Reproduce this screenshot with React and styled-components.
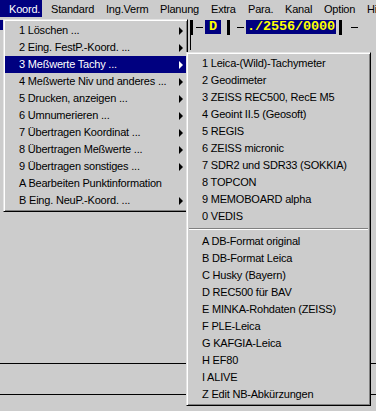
import React from 'react'
import styled, { createGlobalStyle } from 'styled-components'

const GlobalStyle = createGlobalStyle`
  html, body {
    margin: 0;
    padding: 0;
    background: #cccccc;
  }
`

const menuTitles = [
  { label: 'Koord.', w: 42, active: true },
  { label: 'Standard', w: 55 },
  { label: 'Ing.Verm', w: 54 },
  { label: 'Planung', w: 51 },
  { label: 'Extra', w: 37 },
  { label: 'Para.', w: 37 },
  { label: 'Kanal', w: 39 },
  { label: 'Option', w: 43 },
  { label: 'Hilfe', w: 40 },
]

const koordItems = [
  { label: '1 Löschen ...', sub: true },
  { label: '2 Eing. FestP.-Koord. ...', sub: true },
  { label: '3 Meßwerte Tachy ...', sub: true, active: true },
  { label: '4 Meßwerte Niv und anderes ...', sub: true },
  { label: '5 Drucken, anzeigen ...', sub: true },
  { label: '6 Umnumerieren ...', sub: true },
  { label: '7 Übertragen Koordinat ...', sub: true },
  { label: '8 Übertragen Meßwerte  ...', sub: true },
  { label: '9 Übertragen sonstiges ...', sub: true },
  { label: 'A Bearbeiten Punktinformation' },
  { label: 'B Eing. NeuP.-Koord. ...', sub: true },
]

const tachyGroups = [
  [
    '1 Leica-(Wild)-Tachymeter',
    '2 Geodimeter',
    '3 ZEISS REC500, RecE M5',
    '4 Geoint II.5 (Geosoft)',
    '5 REGIS',
    '6 ZEISS micronic',
    '7 SDR2 und SDR33 (SOKKIA)',
    '8 TOPCON',
    '9 MEMOBOARD alpha',
    '0 VEDIS',
  ],
  [
    'A DB-Format original',
    'B DB-Format Leica',
    'C Husky (Bayern)',
    'D REC500 für BAV',
    'E MINKA-Rohdaten (ZEISS)',
    'F PLE-Leica',
    'G KAFGIA-Leica',
    'H EF80',
    'I ALIVE',
    'Z Edit NB-Abkürzungen',
  ],
]

const Screen = styled.div`
  position: relative;
  width: 376px;
  height: 411px;
  overflow: hidden;
  display: flex;
  flex-direction: column;
  background: #cccccc;
  color: #000;
  font-family: 'Liberation Sans', Arial, sans-serif;
  font-size: 11px;
  letter-spacing: -0.2px;
`

const MenuBar = styled.div`
  display: flex;
  height: 17px;
  flex-shrink: 0;
  white-space: nowrap;
`

const MenuTitle = styled.div`
  flex: 0 0 ${(p) => p.$w}px;
  box-sizing: border-box;
  display: flex;
  align-items: center;
  padding-left: 9px;
  background: ${(p) => (p.$active ? '#000080' : 'transparent')};
  color: ${(p) => (p.$active ? '#ffffff' : '#000000')};
`

const Workspace = styled.div`
  flex: 1;
  display: flex;
  flex-direction: column;
`

const FieldRow = styled.div`
  display: flex;
  align-items: flex-start;
  height: 15px;
  margin-top: 3px;
`

const Stub = styled.div`
  width: 3px;
  height: 10px;
  background: #000080;
  margin-right: 187px;
`

const Bar = styled.div`
  position: relative;
  width: 3px;
  height: 15px;
  background: #000;
  margin-right: ${(p) => p.$gap || 4}px;

  &::after {
    content: '';
    display: ${(p) => (p.$tail ? 'block' : 'none')};
    position: absolute;
    left: 0;
    top: 15px;
    width: 1px;
    height: 15px;
    background: #000;
  }
`

const Dash = styled.div`
  width: 7px;
  height: 1px;
  background: #000;
  margin-top: 7px;
  margin-right: ${(p) => p.$gap || 2}px;
`

const Field = styled.div`
  height: 14px;
  line-height: 14px;
  padding: 0 ${(p) => p.$pad}px;
  background: #000080;
  color: #ffff00;
  font-family: 'Liberation Mono', 'DejaVu Sans Mono', monospace;
  font-weight: bold;
  font-size: 13.5px;
  letter-spacing: -0.1px;
  margin-right: ${(p) => p.$gap}px;
`

const Rules = styled.div`
  margin-top: auto;
  margin-bottom: 16px;
  height: 30px;
  border-top: 1px solid #000;
  border-bottom: 1px solid #000;
`

const Menu = styled.div`
  position: absolute;
  left: ${(p) => p.$left}px;
  top: ${(p) => p.$top}px;
  width: 185px;
  box-sizing: border-box;
  padding: 2px 1px;
  background: #cccccc;
  border: 1px solid;
  border-color: #e4e4e4 #000 #000 #e4e4e4;
  box-shadow: inset 1px 1px #ffffff, inset -1px -1px #808080;
  white-space: nowrap;
`

const Item = styled.div`
  position: relative;
  height: 17px;
  line-height: 17px;
  padding-left: 14px;
  background: ${(p) => (p.$active ? '#000080' : 'transparent')};
  color: ${(p) => (p.$active ? '#ffffff' : '#000000')};
`

const Arrow = styled.span`
  position: absolute;
  right: 3px;
  top: 5px;
  width: 0;
  height: 0;
  border-top: 4px solid transparent;
  border-bottom: 4px solid transparent;
  border-left: 4px solid currentColor;
`

const Separator = styled.div`
  height: 0;
  margin: 3px 1px;
  border-top: 1px solid #808080;
  border-bottom: 1px solid #ffffff;
`

const App = () => (
  <Screen>
    <GlobalStyle />
    <MenuBar>
      {menuTitles.map((t) => (
        <MenuTitle key={t.label} $w={t.w} $active={t.active}>
          {t.label}
        </MenuTitle>
      ))}
    </MenuBar>

    <Workspace>
      <FieldRow>
        <Stub />
        <Bar $tail $gap={3} />
        <Dash />
        <Field $pad={4} $gap={6}>D</Field>
        <Bar $gap={7} />
        <Dash $gap={0} />
        <Field $pad={1} $gap={3}>./2556/0000</Field>
        <Bar $gap={9} />
        <Dash />
      </FieldRow>
      <Rules />
    </Workspace>

    <Menu $left={3} $top={19}>
      {koordItems.map((it) => (
        <Item key={it.label} $active={it.active}>
          {it.label}
          {it.sub && <Arrow />}
        </Item>
      ))}
    </Menu>

    <Menu $left={186} $top={52}>
      {tachyGroups.map((group, gi) => (
        <React.Fragment key={gi}>
          {gi > 0 && <Separator />}
          {group.map((label) => (
            <Item key={label}>{label}</Item>
          ))}
        </React.Fragment>
      ))}
    </Menu>
  </Screen>
)

export default App
